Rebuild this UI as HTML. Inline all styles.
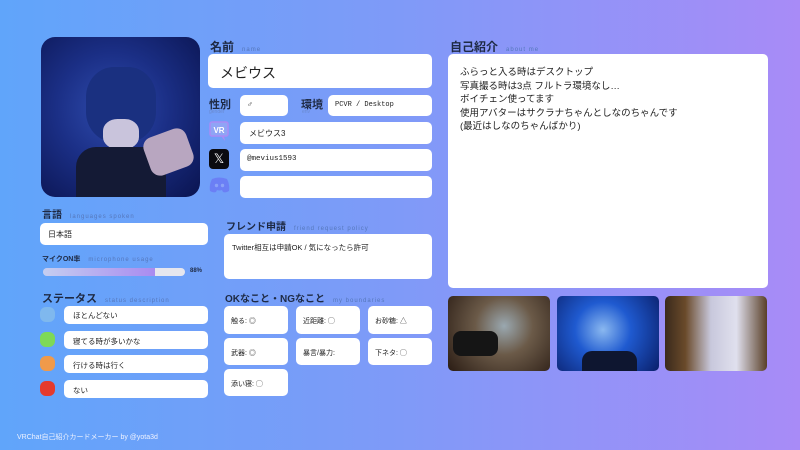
<!DOCTYPE html>
<html><head><meta charset="utf-8"><style>
*{margin:0;padding:0;box-sizing:border-box}
body{width:800px;height:450px;overflow:hidden;position:relative;background:linear-gradient(90deg,#60a5fa 0%,#7f9af8 50%,#a88bf7 100%);font-family:"Liberation Sans","Noto Sans CJK JP",sans-serif;color:#222}
.a{position:absolute}
.box{position:absolute;background:#fff;border-radius:5px}
.lbl{position:absolute;font-size:11px;color:#1e2a44;font-weight:bold;white-space:nowrap}
.lbl small{font-size:6px;color:#5577bb;font-weight:normal;margin-left:8px;letter-spacing:1px}
.t{font-size:8px;color:#222;position:absolute;white-space:nowrap}
.dot{position:absolute;width:15px;height:15px;border-radius:6px}
</style></head><body>
<div class="a" style="left:41px;top:37px;width:159px;height:160px;border-radius:14px;overflow:hidden;background:radial-gradient(circle at 45% 45%,#2f4cae 0%,#1b2f86 45%,#0a1450 100%)">
<div class="a" style="left:45px;top:30px;width:70px;height:75px;border-radius:40%;background:#1a3080"></div>
<div class="a" style="left:62px;top:82px;width:36px;height:30px;border-radius:40%;background:#c9c4dc"></div>
<div class="a" style="left:35px;top:110px;width:90px;height:50px;background:#141a35;border-radius:20px 20px 0 0"></div>
<div class="a" style="left:105px;top:95px;width:45px;height:40px;background:#b8a6c0;border-radius:10px;transform:rotate(-20deg)"></div>
</div>

<div class="lbl" style="left:210px;top:38px;font-size:12px">名前<small>name</small></div>
<div class="box" style="left:208px;top:54px;width:224px;height:34px"><span class="t" style="left:12px;top:9px;font-size:14px">メビウス</span></div>

<div class="lbl" style="left:209px;top:96px">性別</div><div class="a" style="left:209px;top:109px;font-size:5px;color:#6a8ad0">gender</div>
<div class="box" style="left:240px;top:95px;width:48px;height:21px"><span class="t" style="left:7px;top:5px">♂</span></div>
<div class="lbl" style="left:301px;top:96px">環境</div><div class="a" style="left:302px;top:109px;font-size:5px;color:#6a8ad0">env</div>
<div class="box" style="left:328px;top:95px;width:104px;height:21px"><span class="t" style="left:7px;top:6px;font-size:7px;font-family:'Liberation Mono',monospace">PCVR / Desktop</span></div>

<svg class="a" style="left:209px;top:121px" width="20" height="22" viewBox="0 0 20 22"><rect x="1" y="1" width="18" height="14" rx="2" fill="#8fa4f5" stroke="#a98bf5" stroke-width="1.5"/><path d="M12 15 L16 20 L15 15" fill="#a98bf5"/><text x="10" y="12" font-size="8" fill="#fff" text-anchor="middle" font-family="Liberation Sans" font-weight="bold">VR</text></svg>
<div class="box" style="left:240px;top:122px;width:192px;height:22px"><span class="t" style="left:9px;top:6px">メビウス3</span></div>
<div class="a" style="left:209px;top:149px;width:20px;height:20px;background:#0b0b10;border-radius:4px;color:#fff;font-size:13px;text-align:center;line-height:20px">𝕏</div>
<div class="box" style="left:240px;top:149px;width:192px;height:22px"><span class="t" style="left:7px;top:6px;font-family:'Liberation Mono',monospace;font-size:7.5px">@mevius1593</span></div>
<svg class="a" style="left:209px;top:177px" width="21" height="16" viewBox="0 0 21 16"><path d="M3 2 Q10 -1 18 2 Q21 8 20 14 Q17 16 14 15 L13 13 Q10 14 8 13 L7 15 Q4 16 1 14 Q0 8 3 2Z" fill="#6b7ff5"/><circle cx="7.5" cy="8.5" r="1.7" fill="#8aa2f7"/><circle cx="13.5" cy="8.5" r="1.7" fill="#8aa2f7"/></svg>
<div class="box" style="left:240px;top:176px;width:192px;height:22px"></div>

<div class="lbl" style="left:42px;top:206px;font-size:10px">言語<small>languages spoken</small></div>
<div class="box" style="left:40px;top:223px;width:168px;height:22px"><span class="t" style="left:8px;top:6px">日本語</span></div>
<div class="lbl" style="left:42px;top:254px;font-size:7px">マイクON率<small>microphone usage</small></div>
<div class="a" style="left:43px;top:268px;width:142px;height:8px;border-radius:4px;background:#e6e6ee;overflow:hidden"><div style="width:112px;height:8px;background:linear-gradient(90deg,rgba(120,150,245,0.3),#a98bf0)"></div></div>
<div class="a" style="left:190px;top:268px;font-size:6px;font-weight:bold;color:#1e2a44">88%</div>

<div class="lbl" style="left:42px;top:290px">ステータス<small>status description</small></div>
<div class="dot" style="left:40px;top:307px;background:#7fb8ee"></div>
<div class="dot" style="left:40px;top:332px;background:#7ed957"></div>
<div class="dot" style="left:40px;top:356px;background:#f09a4a"></div>
<div class="dot" style="left:40px;top:381px;background:#e53a2c"></div>
<div class="box" style="left:64px;top:306px;width:144px;height:18px"><span class="t" style="left:9px;top:4px;font-size:7.5px">ほとんどない</span></div>
<div class="box" style="left:64px;top:331px;width:144px;height:18px"><span class="t" style="left:9px;top:5px;font-size:7.5px">寝てる時が多いかな</span></div>
<div class="box" style="left:64px;top:355px;width:144px;height:18px"><span class="t" style="left:9px;top:5px;font-size:7.5px">行ける時は行く</span></div>
<div class="box" style="left:64px;top:380px;width:144px;height:18px"><span class="t" style="left:9px;top:5px;font-size:7.5px">ない</span></div>

<div class="lbl" style="left:226px;top:218px;font-size:10px">フレンド申請<small>friend request policy</small></div>
<div class="box" style="left:224px;top:234px;width:208px;height:45px"><span class="t" style="left:8px;top:8px;font-size:7.5px">Twitter相互は申請OK / 気になったら許可</span></div>

<div class="lbl" style="left:225px;top:290px;font-size:10px">OKなこと・NGなこと<small>my boundaries</small></div>
<div class="box" style="left:224px;top:306px;width:64px;height:28px"><span class="t" style="left:7px;top:10px;font-size:7px">触る: ◎</span></div>
<div class="box" style="left:296px;top:306px;width:64px;height:28px"><span class="t" style="left:7px;top:10px;font-size:7px">近距離: ◯</span></div>
<div class="box" style="left:368px;top:306px;width:64px;height:28px"><span class="t" style="left:7px;top:10px;font-size:7px">お砂糖: △</span></div>
<div class="box" style="left:224px;top:338px;width:64px;height:27px"><span class="t" style="left:7px;top:10px;font-size:7px">武器: ◎</span></div>
<div class="box" style="left:296px;top:338px;width:64px;height:27px"><span class="t" style="left:7px;top:10px;font-size:7px">暴言/暴力:</span></div>
<div class="box" style="left:368px;top:338px;width:64px;height:27px"><span class="t" style="left:7px;top:10px;font-size:7px">下ネタ: ◯</span></div>
<div class="box" style="left:224px;top:369px;width:64px;height:27px"><span class="t" style="left:7px;top:10px;font-size:7px">添い寝: ◯</span></div>

<div class="lbl" style="left:450px;top:38px;font-size:12px">自己紹介<small>about me</small></div>
<div class="box" style="left:448px;top:54px;width:320px;height:234px"><div class="t" style="left:12px;top:12px;font-size:9.5px;line-height:13.5px">ふらっと入る時はデスクトップ<br>写真撮る時は3点 フルトラ環境なし…<br>ボイチェン使ってます<br>使用アバターはサクラナちゃんとしなのちゃんです<br>(最近はしなのちゃんばかり)</div></div>

<div class="a" style="left:448px;top:296px;width:102px;height:75px;border-radius:5px;overflow:hidden;background:radial-gradient(circle at 55% 40%,#9aa8b0 0%,#6b5a48 40%,#2a1c14 100%)"><div class="a" style="left:5px;top:35px;width:45px;height:25px;background:#151515;border-radius:8px"></div></div>
<div class="a" style="left:557px;top:296px;width:102px;height:75px;border-radius:5px;overflow:hidden;background:radial-gradient(circle at 45% 45%,#8ab8f0 0%,#1f5ad0 40%,#0a1f6a 100%)"><div class="a" style="left:25px;top:55px;width:55px;height:20px;background:#0e1630;border-radius:10px 10px 0 0"></div></div>
<div class="a" style="left:665px;top:296px;width:102px;height:75px;border-radius:5px;overflow:hidden;background:linear-gradient(90deg,#3a2a1c 0%,#6a4a2a 20%,#c8c8dc 45%,#e0e0ee 70%,#5a4028 100%)"></div>

<div class="a" style="left:17px;top:432px;font-size:7px;color:#eef2ff">VRChat自己紹介カードメーカー by @yota3d</div>
</body></html>
